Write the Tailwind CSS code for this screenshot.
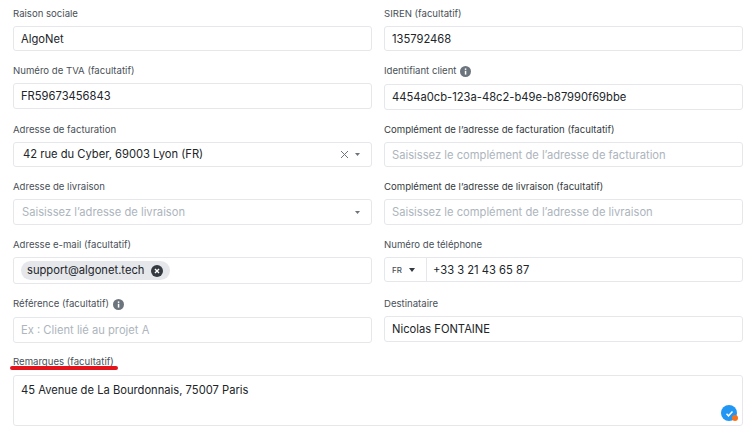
<!DOCTYPE html>
<html lang="fr">

<head>
  <meta charset="UTF-8">
  <title>Client</title>
  <script src="https://cdn.jsdelivr.net/npm/@tailwindcss/browser@4"></script>
</head>

<body class="bg-white font-['Inter',sans-serif] text-[#212529] overflow-hidden">

  <form class="relative grid grid-cols-[359px_359px] gap-x-3 gap-y-[9px] items-start pl-[13px] pt-[3px]">

    <div>
      <label class="flex items-center h-5 pt-[2px] mb-[3px] text-[9.6px] text-[#495057]">Raison sociale</label>
      <input value="AlgoNet" class="block w-full h-[25px] pl-[7px] pr-2 text-[11.2px] border border-[#e5e7eb] rounded-[3px] outline-none">
    </div>
    <div>
      <label class="flex items-center h-5 pt-[2px] mb-[3px] text-[9.6px] text-[#495057]">SIREN (facultatif)</label>
      <input value="135792468" class="block w-full h-[25px] pl-[7px] pr-2 text-[11.2px] border border-[#e5e7eb] rounded-[3px] outline-none">
    </div>

    <div>
      <label class="flex items-center h-5 pt-[2px] mb-[3px] text-[9.6px] text-[#495057]">Numéro de TVA (facultatif)</label>
      <input value="FR59673456843" class="block w-full h-[26px] pl-[7px] pr-2 text-[11.2px] border border-[#e5e7eb] rounded-[3px] outline-none">
    </div>
    <div>
      <label class="flex items-center gap-1 h-[21px] pt-[2px] mb-[3px] text-[9.6px] text-[#495057]">Identifiant client
        <svg class="w-[11px] h-[11px]" viewBox="0 0 16 16"><circle cx="8" cy="8" r="8" fill="#6c757d"/><rect x="7" y="7" width="2.2" height="5.5" fill="#fff"/><rect x="7" y="3.5" width="2.2" height="2.2" fill="#fff"/></svg>
      </label>
      <input value="4454a0cb-123a-48c2-b49e-b87990f69bbe" class="block w-full h-[26px] pl-[7px] pr-2 text-[11.2px] border border-[#e5e7eb] rounded-[3px] outline-none">
    </div>

    <div>
      <label class="flex items-center h-5 pt-[2px] mb-[3px] text-[9.6px] text-[#495057]">Adresse de facturation</label>
      <div class="flex items-center h-[25px] pl-[9px] pr-[11px] text-[11.2px] border border-[#e5e7eb] rounded-[3px]">
        <span class="flex-1">42 rue du Cyber, 69003 Lyon (FR)</span>
        <svg class="w-[9px] h-[9px] mr-[6px]" viewBox="0 0 9 9"><path d="M1 1l7 7M8 1L1 8" stroke="#6c757d" stroke-width="1" fill="none"/></svg>
        <svg class="w-[5px] h-[3px]" viewBox="0 0 5 3"><path d="M0 0h5L2.500 3z" fill="#6c757d"/></svg>
      </div>
    </div>
    <div>
      <label class="flex items-center h-5 pt-[2px] mb-[3px] text-[9.6px] text-[#343a40]">Complément de l’adresse de facturation (facultatif)</label>
      <input placeholder="Saisissez le complément de l’adresse de facturation" class="block w-full h-[25px] pl-[7px] pr-2 text-[11.2px] placeholder:text-[#adb5bd] border border-[#e5e7eb] rounded-[3px] outline-none">
    </div>

    <div>
      <label class="flex items-center h-5 pt-[2px] mb-[3px] text-[9.6px] text-[#495057]">Adresse de livraison</label>
      <div class="flex items-center h-[26px] pl-2 pr-[11px] text-[11.2px] border border-[#e5e7eb] rounded-[3px]">
        <span class="flex-1 text-[#adb5bd]">Saisissez l’adresse de livraison</span>
        <svg class="w-[5px] h-[3px]" viewBox="0 0 5 3"><path d="M0 0h5L2.500 3z" fill="#6c757d"/></svg>
      </div>
    </div>
    <div>
      <label class="flex items-center h-5 pt-[2px] mb-[3px] text-[9.6px] text-[#343a40]">Complément de l’adresse de livraison (facultatif)</label>
      <input placeholder="Saisissez le complément de l’adresse de livraison" class="block w-full h-[26px] pl-[7px] pr-2 text-[11.2px] placeholder:text-[#adb5bd] border border-[#e5e7eb] rounded-[3px] outline-none">
    </div>

    <div>
      <label class="flex items-center h-5 pt-[2px] mb-[3px] text-[9.6px] text-[#495057]">Adresse e-mail (facultatif)</label>
      <div class="flex items-center h-[27px] pl-[7px] border border-[#e5e7eb] rounded-[3px]">
        <span class="flex items-center gap-[7px] h-[19px] pl-[6px] pr-[7px] text-[11.2px] bg-[#e5e7eb] rounded-full">support@algonet.tech
          <svg class="w-[12px] h-[12px]" viewBox="0 0 16 16"><circle cx="8" cy="8" r="8" fill="#343a40"/><path d="M5.300 5.300l5.400 5.400M10.700 5.300l-5.400 5.400" stroke="#fff" stroke-width="1.800"/></svg>
        </span>
      </div>
    </div>
    <div>
      <label class="flex items-center h-5 pt-[2px] mb-[3px] text-[9.6px] text-[#495057]">Numéro de téléphone</label>
      <div class="flex items-center h-[25px] border border-[#e5e7eb] rounded-[3px]">
        <span class="flex items-center gap-[7px] h-full w-[42px] pl-[7px] border-r border-[#e5e7eb] text-[8px] font-medium text-[#495057]">FR
          <svg class="w-[6px] h-[4px]" viewBox="0 0 6 4"><path d="M0 0h6L3 4z" fill="#343a40"/></svg>
        </span>
        <input value="+33 3 21 43 65 87" class="flex-1 min-w-0 h-full pl-[6px] pr-2 text-[11.2px] outline-none">
      </div>
    </div>

    <div>
      <label class="flex items-center gap-1 h-[21px] pt-[2px] mb-[3px] text-[9.6px] text-[#495057]">Référence (facultatif)
        <svg class="w-[11px] h-[11px]" viewBox="0 0 16 16"><circle cx="8" cy="8" r="8" fill="#6c757d"/><rect x="7" y="7" width="2.2" height="5.5" fill="#fff"/><rect x="7" y="3.5" width="2.2" height="2.2" fill="#fff"/></svg>
      </label>
      <input placeholder="Ex : Client lié au projet A" class="block w-full h-[26px] pl-[7px] pr-2 text-[11.2px] placeholder:text-[#adb5bd] border border-[#e5e7eb] rounded-[3px] outline-none">
    </div>
    <div>
      <label class="flex items-center h-5 pt-[2px] mb-[3px] text-[9.6px] text-[#495057]">Destinataire</label>
      <input value="Nicolas FONTAINE" class="block w-full h-[26px] pl-[7px] pr-2 text-[11.2px] border border-[#e5e7eb] rounded-[3px] outline-none">
    </div>

    <div class="col-span-2 relative">
      <label class="flex items-center h-5 mb-[3px] text-[9.6px] text-[#495057]">Remarques (facultatif)</label>
      <textarea class="block w-full h-[51px] pl-[7px] pr-2 py-1 text-[11.2px] leading-5 border border-[#e5e7eb] rounded-[3px] outline-none resize-none">45 Avenue de La Bourdonnais, 75007 Paris</textarea>

      <!-- annotation rouge sous le label -->
      <div class="absolute left-[-3px] top-[14px] w-[108px] h-1 bg-[#e3141c] rounded-full"></div>

      <!-- badge correcteur -->
      <div class="absolute right-[6px] bottom-[5px] w-4 h-4 rounded-full bg-[#2196f3] flex items-center justify-center">
        <svg class="w-[9px] h-[9px]" viewBox="0 0 9 9"><path d="M1.500 4.800l2 2L7.500 2.500" stroke="#fff" stroke-width="1.500" fill="none"/></svg>
        <span class="absolute right-[-1px] bottom-0 w-[6px] h-[6px] rounded-full bg-[#f97316]"></span>
      </div>
    </div>

  </form>

</body>

</html>
